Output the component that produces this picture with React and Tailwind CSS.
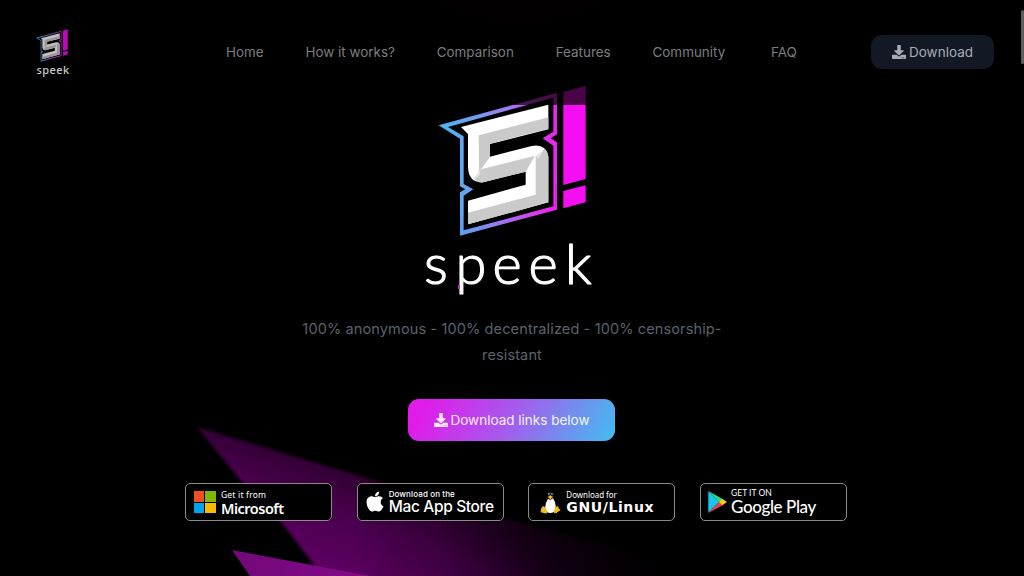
import { FaDownload, FaApple } from "react-icons/fa";

const links = ["Home", "How it works?", "Comparison", "Features", "Community"];

function Emblem({ className }) {
  return (
    <svg viewBox="0 0 570 690" className={className} aria-hidden="true">
      <defs>
        <linearGradient id="edge" gradientUnits="userSpaceOnUse" x1="60" y1="200" x2="411" y2="200">
          <stop offset="0" stopColor="#4ab8f0" />
          <stop offset="0.3" stopColor="#6f9cf2" />
          <stop offset="0.6" stopColor="#a578f0" />
          <stop offset="0.85" stopColor="#dd3cf0" />
          <stop offset="1" stopColor="#f020f0" />
        </linearGradient>
        <linearGradient id="low" gradientUnits="userSpaceOnUse" x1="120" y1="470" x2="411" y2="390">
          <stop offset="0" stopColor="#5aa2f2" />
          <stop offset="0.35" stopColor="#9080f0" />
          <stop offset="0.75" stopColor="#d840f0" />
          <stop offset="1" stopColor="#f01cf0" />
        </linearGradient>
      </defs>
      <path fill="url(#edge)" d="M56 148 L411 50 V175 L392 187 L411 199 V330 H400 V209 L368 187 L400 167 V65 L84 153 L131 181 V324 L160 340 L131 359 V420 H120 V349 L136 340 L120 331 V188Z" />
      <path fill="url(#low)" d="M120 420 H131 V463 L400 391 V330 H411 V401 L120 479Z" />
      <path fill="#f60ef3" d="M430 48 L497 30 V309 L430 327Z M430 345 L497 328 V379 L430 397Z" />
      <path fill="#fff" d="M123 153 L385 86 V160 L210 204 V242 L335 210 Q378 202 385 242 V379 L144 445 V374 L317 326 V287 L190 319 Q146 322 144 274 V174Z" />
      <path fill="#cacaca" d="M176 178 L385 124 V158 L210 203 V243 L183 280 L163 309 Q177 298 177 278Z" />
      <path fill="#cacaca" d="M183 280 L345 239 L317 287 L188 319 Q174 321 162 309Z" />
      <path fill="#cacaca" d="M347 242 Q367 226 375 218 Q385 230 385 246 V379 L144 445 V410 L347 356Z" />
      <path fill="#e5e5e5" d="M347 240 L375 217 L354 249Z M163 309 L183 280 L177 300Z" />
    </svg>
  );
}

function MicrosoftIcon() {
  return (
    <div className="grid size-[22px] grid-cols-2 gap-px">
      <i className="bg-[#f25022]" />
      <i className="bg-[#7fba00]" />
      <i className="bg-[#00a4ef]" />
      <i className="bg-[#ffb900]" />
    </div>
  );
}

function Tux() {
  return (
    <svg viewBox="0 0 63 69" className="h-[23px] w-[21px]">
      <path fill="#181818" d="M23 8 Q31-3 40 8 L41 24 Q53 42 49 61 H15 Q12 43 23 24Z" />
      <path fill="#fff" d="M24 23 Q31 30 39 22 Q50 38 46 54 Q43 66 31 66 Q18 66 16 54 Q14 39 24 23Z" />
      <circle cx="26.5" cy="9" r="3" fill="#aaa" />
      <circle cx="35.5" cy="9" r="3" fill="#aaa" />
      <circle cx="27" cy="10" r="1.5" fill="#111" />
      <circle cx="35" cy="10" r="1.5" fill="#111" />
      <path fill="#efb820" d="M23 18 L31 13 L39 18 L31 25Z" />
      <path fill="#f2bd18" d="M7 47 L12 45 L23 62 Q22 69 14 67 L2 64 L3 54Z M47 49 L53 44 L57 53 L62 57 L49 66 Q42 69 41 62Z" />
    </svg>
  );
}

function PlayIcon() {
  return (
    <svg viewBox="0 0 57 66" className="h-[22px] w-[19px]">
      <path fill="#16c8ef" d="M1 1 L34 33 L1 65Z" />
      <path fill="#2bdc78" d="M1 0 L44 24 L34 34Z" />
      <path fill="#ee3c50" d="M1 66 L44 43 L34 32Z" />
      <path fill="#ffcb16" d="M43 23 L57 33 L43 43 L33 33Z" />
    </svg>
  );
}

function Badge({ pad, icon, top, topClass, name, nameClass }) {
  return (
    <a className={"flex h-[38px] w-[147px] items-center rounded-[5px] border border-[#8b8b8b] bg-black text-white " + pad}>
      {icon}
      <span className="flex flex-col items-start whitespace-nowrap">
        <span className={topClass}>{top}</span>
        <span className={nameClass}>{name}</span>
      </span>
    </a>
  );
}

function Backdrop() {
  return (
    <svg viewBox="0 0 1024 576" className="absolute inset-0 h-[576px] w-full" aria-hidden="true">
      <defs>
        <linearGradient id="beam" gradientUnits="userSpaceOnUse" x1="310" y1="590" x2="365" y2="440">
          <stop offset="0" stopColor="#65006a" />
          <stop offset="0.5" stopColor="#4a004e" />
          <stop offset="0.85" stopColor="#280029" />
          <stop offset="1" stopColor="#1a001c" />
        </linearGradient>
        <linearGradient id="fade" gradientUnits="userSpaceOnUse" x1="350" y1="540" x2="660" y2="520">
          <stop offset="0" stopColor="#000" stopOpacity="0" />
          <stop offset="0.3" stopColor="#000" stopOpacity="0.2" />
          <stop offset="0.65" stopColor="#000" stopOpacity="0.72" />
          <stop offset="1" stopColor="#000" />
        </linearGradient>
        <linearGradient id="ray" gradientUnits="userSpaceOnUse" x1="232" y1="550" x2="365" y2="576">
          <stop offset="0" stopColor="#720878" />
          <stop offset="1" stopColor="#84088a" />
        </linearGradient>
        <radialGradient id="haze">
          <stop offset="0" stopColor="#080006" />
          <stop offset="1" stopColor="#080006" stopOpacity="0" />
        </radialGradient>
        <filter id="soft" x="-10%" y="-10%" width="120%" height="120%">
          <feGaussianBlur stdDeviation="1.6" />
        </filter>
      </defs>
      <ellipse cx="520" cy="0" rx="500" ry="130" fill="url(#haze)" />
      <path filter="url(#soft)" fill="url(#beam)" d="M197 427 L380 482 L760 590 V620 H346 Q324 586 312 562 L282 523 L242 482Z" />
      <path fill="url(#fade)" d="M300 400 H1024 V576 H300Z" />
      <path fill="url(#ray)" d="M232 550 L370 576 H250Z" />
    </svg>
  );
}

export default function App() {
  return (
    <div className="relative h-[576px] w-full overflow-hidden bg-black font-['Inter',sans-serif]">
      <Backdrop />
      <header className="absolute inset-x-0 top-0 z-10 flex h-[105px] items-center bg-black/70 pb-px pl-[35px] pr-[30px]">
        <a className="flex w-[36px] flex-col items-center">
          <span className="flex h-[36px] w-[36px] justify-center overflow-hidden opacity-75">
            <Emblem className="-ml-[2px] -mt-[2px] h-[50px] w-[41px] shrink-0" />
          </span>
          <span className="-mt-px font-['Noto_Sans',sans-serif] text-[11px] font-medium leading-[12px] tracking-[0.4px] text-[#c9c9c9]">speek</span>
        </a>
        <nav className="ml-[155px] flex items-center gap-[41.8px] whitespace-nowrap text-[13.45px] leading-5 text-[#7c7d80]">
          {links.map((l) => (
            <a key={l}>{l}</a>
          ))}
          <a className="ml-1">FAQ</a>
        </nav>
        <button className="ml-auto flex h-[34px] w-[123px] items-center justify-center gap-[3px] rounded-[11px] bg-[#131825] text-[13.5px] text-[#a7abb4]">
          <FaDownload className="size-[14px]" />
          <span>Download</span>
        </button>
        <span className="absolute right-0 top-[10px] h-[54px] w-[3px] rounded-full bg-[#5e5e5e]" />
      </header>

      <main className="relative flex flex-col items-center pt-[76px]">
        <div className="relative ml-[6px] h-[230px] w-[190px]">
          <Emblem className="h-[230px] w-[190px]" />
          <svg viewBox="0 0 190 230" className="absolute inset-0 h-[230px] w-[190px] overflow-visible">
            <text y="207.5" x="4 35.5 72.5 108.5 145" fill="#fff" stroke="#fff" strokeWidth="1.2" strokeLinejoin="round" fontFamily="Lato, sans-serif" fontSize="56" fontWeight="300">speek</text>
            <rect x="38" y="209" width="2" height="4" fill="#d81cc8" />
          </svg>
        </div>
        <p className="mt-[10px] w-[440px] text-center text-[14.5px] leading-[26px] tracking-[0.13px] text-[#5b626d]">
          100% anonymous - 100% decentralized - 100% censorship-resistant
        </p>
        <button className="-ml-px mt-[31px] flex h-[42px] w-[207px] items-center justify-center gap-[3px] rounded-[11px] bg-[linear-gradient(118deg,#e11bea_8%,#a45cec_50%,#45baf0_98%)] text-[13.5px] text-white/90">
          <FaDownload className="size-[14px]" />
          <span>Download links below</span>
        </button>
        <div className="ml-[8px] mt-[42px] flex gap-[24.7px]">
          <Badge
            pad="gap-[5px] pl-[8px]"
            icon={<MicrosoftIcon />}
            top="Get it from"
            topClass="font-['Noto_Sans',sans-serif] text-[8.5px] leading-[11px] tracking-[0.2px]"
            name="Microsoft"
            nameClass="font-['Noto_Sans',sans-serif] text-[14.5px] font-semibold leading-[16px] tracking-[-0.5px]"
          />
          <Badge
            pad="gap-[5px] pl-[8px]"
            icon={<FaApple className="-mt-[2px] h-[23px] w-[18px]" />}
            top="Download on the"
            topClass="text-[8px] font-medium leading-[9px] tracking-[0.12px]"
            name="Mac App Store"
            nameClass="text-[15.5px] font-medium leading-[15px] tracking-[-0.35px]"
          />
          <Badge
            pad="gap-[5px] pl-[11px]"
            icon={<Tux />}
            top="Download for"
            topClass="font-['Noto_Sans',sans-serif] text-[8px] leading-[10px] tracking-[-0.05px]"
            name="GNU/Linux"
            nameClass="font-['DejaVu_Sans',sans-serif] text-[14px] font-bold leading-[15px] tracking-[0.6px]"
          />
          <Badge
            pad="gap-[4px] pl-[7px]"
            icon={<PlayIcon />}
            top="GET IT ON"
            topClass="font-['Lato',sans-serif] text-[8.5px] leading-[10px]"
            name="Google Play"
            nameClass="font-['Lato',sans-serif] text-[17px] font-medium leading-[18px] tracking-[-0.4px]"
          />
        </div>
      </main>
    </div>
  );
}
